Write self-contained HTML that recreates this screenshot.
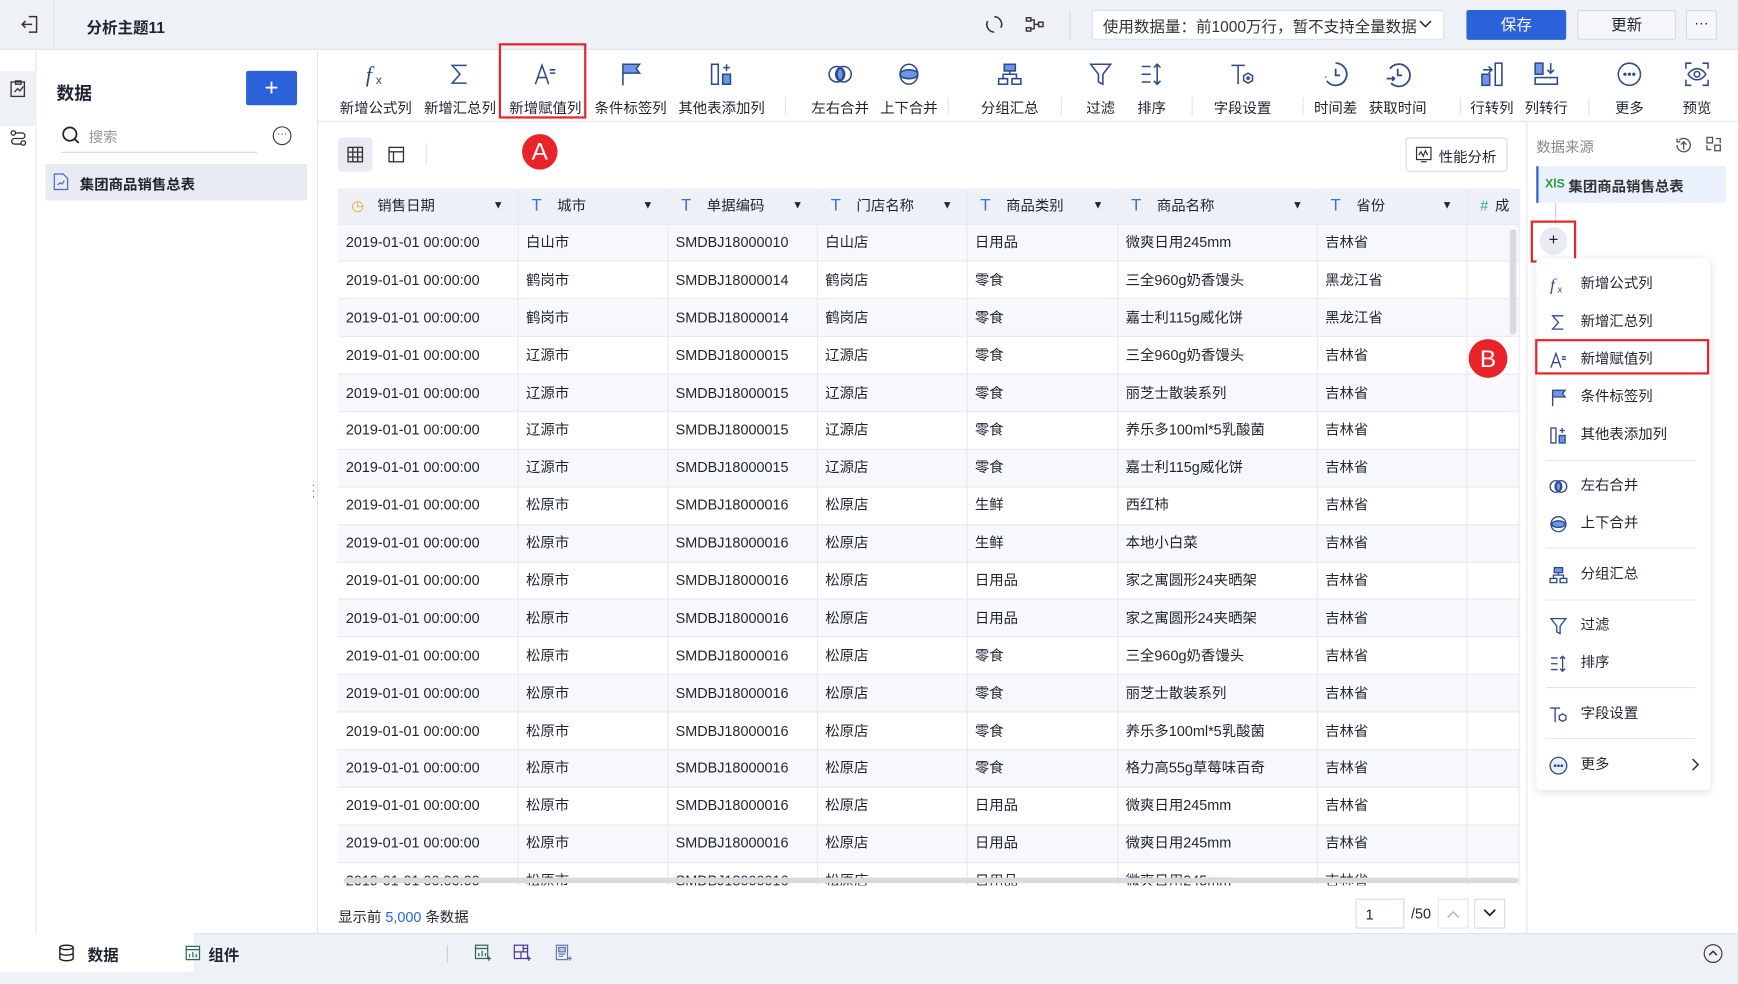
<!DOCTYPE html>
<html><head><meta charset="utf-8">
<style>
*{box-sizing:border-box;margin:0;padding:0}
html,body{width:1738px;height:984px;overflow:hidden;background:#fff}
body{font-family:"Liberation Sans","Noto Sans CJK SC",sans-serif;color:#1f2433;font-size:13px}
#w{width:1568px;height:888px;position:relative;transform:scale(1.10842,1.10811);transform-origin:0 0;background:#fff;overflow:hidden}
.a{position:absolute}
.top{left:0;top:0;width:1568px;height:45px;background:#eef1f6;border-bottom:1px solid #dde1ea}
.tb{top:45px;left:287px;width:1281px;height:65px;border-bottom:1px solid #e3e6ee}
.ti{position:absolute;top:0;height:65px;text-align:center;font-size:13px;color:#1f2433}
.ti svg{position:absolute;top:10px;left:50%;margin-left:-12px}
.ti span{position:absolute;top:42px;left:0;right:0;white-space:nowrap}
.sep{position:absolute;top:88px;width:1px;height:16px;background:#dfe2ea}
table{border-collapse:collapse;position:absolute;left:305px;top:170px;table-layout:fixed}
td,th{height:33.9px;border-right:1px solid #e6e9f0;border-bottom:1px solid #e6e9f0;padding-left:7px;white-space:nowrap;overflow:hidden;font-weight:normal;text-align:left;font-size:13px;line-height:16px}
td{padding-top:0}
th{height:32px;background:#edf0f6;padding-left:12px}
tr:nth-child(even) td{background:#f7f8fb}
.T{color:#3c6fe0;font-size:15px;margin-right:14px}
.dr{float:right;margin-right:12px;font-size:10px;line-height:16px}
.mi{position:absolute;left:1398px;font-size:13px;height:20px;line-height:20px}
.mi i{display:inline-block;width:28px;color:#2d4a8a;font-style:normal}
.hl{position:absolute;left:1395px;width:135px;height:1px;background:#e3e6ee}
</style></head><body><div id="w">
<div class="a top"></div>
<div class="a" style="left:48px;top:0;width:1px;height:45px;background:#dde1ea"></div>
<svg class="a" style="left:18px;top:13px" width="18" height="18" viewBox="0 0 18 18" fill="none" stroke="#333" stroke-width="1.3"><path d="M8 2h7v14H8M2 9h9M5 6L2 9l3 3"/></svg>
<div class="a" style="left:78px;top:15px;font-weight:bold;font-size:14px">分析主题11</div>
<svg class="a" style="left:888px;top:13px" width="18" height="18" viewBox="0 0 18 18" fill="none" stroke="#333" stroke-width="1.4"><path d="M9 2a7 7 0 0 1 6 10M9 16a7 7 0 0 1-6-10"/></svg>
<svg class="a" style="left:925px;top:14px" width="18" height="16" viewBox="0 0 18 16" fill="none" stroke="#333" stroke-width="1.3"><rect x="1" y="2" width="4" height="3"/><rect x="1" y="11" width="4" height="3"/><rect x="12" y="6" width="4" height="4"/><path d="M5 4h3v8H5M8 8h4"/></svg>
<div class="a" style="left:965px;top:10px;width:1px;height:26px;background:#d6dae3"></div>
<div class="a" style="left:985px;top:9px;width:318px;height:27px;background:#fff;border:1px solid #dde1ea;border-radius:3px;padding:4px 9px;font-size:14px;color:#333">使用数据量：前1000万行，暂不支持全量数据<svg style="position:absolute;right:10px;top:8px" width="12" height="8" viewBox="0 0 12 8" fill="none" stroke="#333" stroke-width="1.4"><path d="M1 1l5 5 5-5"/></svg></div>
<div class="a" style="left:1323px;top:9px;width:90px;height:27px;background:#2b62d9;border-radius:2px;color:#fff;text-align:center;line-height:27px;font-size:14px">保存</div>
<div class="a" style="left:1423px;top:9px;width:89px;height:27px;background:#f5f6f9;border:1px solid #d6dae3;border-radius:2px;text-align:center;line-height:25px;font-size:14px">更新</div>
<div class="a" style="left:1521px;top:9px;width:28px;height:27px;background:#f5f6f9;border:1px solid #d6dae3;border-radius:2px;text-align:center;line-height:22px">···</div>

<div class="a" style="left:0;top:45px;width:33px;height:797px;background:#fff;border-right:1px solid #e3e6ee"></div>
<div class="a" style="left:0;top:64px;width:33px;height:50px;background:#eef1f6"></div>
<svg class="a" style="left:8px;top:71px" width="17" height="18" viewBox="0 0 17 18" fill="none" stroke="#333" stroke-width="1.2"><rect x="2" y="3" width="12" height="13"/><path d="M6 2h5v3H6zM5 12l3-3 2 2 3-4"/></svg>
<svg class="a" style="left:8px;top:116px" width="17" height="17" viewBox="0 0 17 17" fill="none" stroke="#333" stroke-width="1.2"><circle cx="4" cy="4" r="2"/><circle cx="13" cy="13" r="2"/><path d="M6 4h6a2.5 2.5 0 0 1 0 5H5a2.5 2.5 0 0 0 0 5h6"/></svg>
<div class="a" style="left:286px;top:45px;width:1px;height:797px;background:#e3e6ee"></div>
<div class="a" style="left:51px;top:71px;font-weight:bold;font-size:16px">数据</div>
<div class="a" style="left:222px;top:64px;width:46px;height:31px;background:#2b62d9;border-radius:2px;color:#fff;text-align:center;font-size:22px;line-height:29px">+</div>
<svg class="a" style="left:55px;top:113px" width="18" height="18" viewBox="0 0 18 18" fill="none" stroke="#222" stroke-width="1.6"><circle cx="8" cy="8" r="6"/><path d="M12.5 12.5L16 16"/></svg>
<div class="a" style="left:80px;top:113px;color:#999;font-size:13px">搜索</div>
<div class="a" style="left:55px;top:137px;width:177px;height:1px;background:#d6dae3"></div>
<div class="a" style="left:246px;top:114px;width:17px;height:17px;border:1.3px solid #333;border-radius:50%;font-size:9px;text-align:center;line-height:11px">···</div>
<div class="a" style="left:41px;top:148px;width:236px;height:33px;background:#e8ebf2"></div>
<svg class="a" style="left:48px;top:156px" width="14" height="16" viewBox="0 0 14 16" fill="none" stroke="#4a6ad0" stroke-width="1.1"><path d="M1 1h8l4 4v10H1z"/><path d="M4 11l2-2 2 1 2-3"/></svg>
<div class="a" style="left:72px;top:156px;font-weight:bold;font-size:13px">集团商品销售总表</div>
<div class="a" style="left:281px;top:436px;color:#666;font-size:11px;line-height:5px">·<br>·<br>·</div>

<div class="a tb">
<div class="ti" style="left:16px;width:72px"><svg width="24" height="24" viewBox="0 0 24 24"><text x="3" y="19" font-family="Liberation Serif" font-style="italic" font-size="20" fill="#2d4a8a">f</text><text x="12" y="21" font-size="11" fill="#2d4a8a" font-family="Liberation Sans">x</text></svg><span>新增公式列</span></div>
<div class="ti" style="left:92px;width:72px"><svg width="24" height="24" viewBox="0 0 24 24" fill="none" stroke="#2d4a8a" stroke-width="1.4"><path d="M18 4H5l7 8-7 8h13"/></svg><span>新增汇总列</span></div>
<div class="ti" style="left:169px;width:72px"><svg width="24" height="24" viewBox="0 0 24 24" fill="none" stroke="#2d4a8a" stroke-width="1.4"><path d="M3 21l6-17 6 17M5.5 15h7M16 8h5M16 11h5"/></svg><span>新增赋值列</span></div>
<div class="ti" style="left:246px;width:72px"><svg width="24" height="24" viewBox="0 0 24 24" fill="none" stroke="#2d4a8a" stroke-width="1.4"><path d="M5 22V3h15l-3 4 3 4H5" fill="#6f95e8"/></svg><span>条件标签列</span></div>
<div class="ti" style="left:322px;width:84px"><svg width="24" height="24" viewBox="0 0 24 24" fill="none" stroke="#2d4a8a" stroke-width="1.4"><rect x="3" y="3" width="6" height="18"/><rect x="13" y="12" width="7" height="9" fill="#6f95e8"/><path d="M16.5 3v6M13.5 6h6"/></svg><span>其他表添加列</span></div>
<div class="sep" style="left:421px;top:43px"></div>
<div class="ti" style="left:435px;width:72px"><svg width="24" height="24" viewBox="0 0 24 24" fill="none" stroke="#2d4a8a" stroke-width="1.4"><circle cx="9" cy="12" r="7"/><circle cx="15" cy="12" r="7"/><path d="M12 6.3a7 7 0 0 1 0 11.4a7 7 0 0 1 0-11.4" fill="#6f95e8"/></svg><span>左右合并</span></div>
<div class="ti" style="left:497px;width:72px"><svg width="24" height="24" viewBox="0 0 24 24" fill="none" stroke="#2d4a8a" stroke-width="1.4"><ellipse cx="12" cy="12" rx="8" ry="9"/><ellipse cx="12" cy="12" rx="8" ry="4" fill="#6f95e8"/></svg><span>上下合并</span></div>
<div class="sep" style="left:568px;top:43px"></div>
<div class="ti" style="left:588px;width:72px"><svg width="24" height="24" viewBox="0 0 24 24" fill="none" stroke="#2d4a8a" stroke-width="1.4"><rect x="7" y="3" width="10" height="6" fill="#6f95e8"/><rect x="2" y="16" width="8" height="5"/><rect x="14" y="16" width="8" height="5"/><path d="M12 9v3M6 16v-4h12v4"/></svg><span>分组汇总</span></div>
<div class="sep" style="left:670px;top:43px"></div>
<div class="ti" style="left:685px;width:42px"><svg width="24" height="24" viewBox="0 0 24 24" fill="none" stroke="#2d4a8a" stroke-width="1.4"><path d="M3 3h18l-7 9v9l-4-2v-7z"/></svg><span>过滤</span></div>
<div class="ti" style="left:731px;width:42px"><svg width="24" height="24" viewBox="0 0 24 24" fill="none" stroke="#2d4a8a" stroke-width="1.4"><path d="M3 5h8M3 12h8M3 19h8M17 3v18M14 6l3-3 3 3M14 18l3 3 3-3"/></svg><span>排序</span></div>
<div class="sep" style="left:788px;top:43px"></div>
<div class="ti" style="left:798px;width:72px"><svg width="24" height="24" viewBox="0 0 24 24" fill="none" stroke="#2d4a8a" stroke-width="1.4"><path d="M2 4h12M8 4v17"/><path d="M17 11l4 2.3v4.4L17 20l-4-2.3v-4.4z"/><circle cx="17" cy="15.5" r="1"/></svg><span>字段设置</span></div>
<div class="sep" style="left:888px;top:43px"></div>
<div class="ti" style="left:893px;width:50px"><svg width="24" height="24" viewBox="0 0 24 24" fill="none" stroke="#2d4a8a" stroke-width="1.6"><path d="M12 2a10 10 0 1 1-8 16" /><path d="M12 7v6h4" /><path d="M3 14v1M5 19v0" stroke-dasharray="1 2"/></svg><span>时间差</span></div>
<div class="ti" style="left:945px;width:58px"><svg width="24" height="24" viewBox="0 0 24 24" fill="none" stroke="#2d4a8a" stroke-width="1.6"><path d="M5 7a10 10 0 1 1 1 13"/><path d="M12 7v6h4M2 16h7M7 14l2 2-2 2"/></svg><span>获取时间</span></div>
<div class="sep" style="left:1030px;top:43px"></div>
<div class="ti" style="left:1037px;width:44px"><svg width="24" height="24" viewBox="0 0 24 24" fill="none" stroke="#2d4a8a" stroke-width="1.4"><rect x="15" y="2" width="6" height="20"/><rect x="3" y="12" width="7" height="10" fill="#6f95e8"/><path d="M4 8h8M9 5l3 3-3 3"/></svg><span>行转列</span></div>
<div class="ti" style="left:1084px;width:48px"><svg width="24" height="24" viewBox="0 0 24 24" fill="none" stroke="#2d4a8a" stroke-width="1.4"><rect x="2" y="15" width="20" height="6"/><rect x="2" y="2" width="7" height="10" fill="#6f95e8"/><path d="M16 2v9M13 8l3 3 3-3"/></svg><span>列转行</span></div>
<div class="sep" style="left:1146px;top:43px"></div>
<div class="ti" style="left:1158px;width:50px"><svg width="24" height="24" viewBox="0 0 24 24" fill="none" stroke="#2d4a8a" stroke-width="1.4"><circle cx="12" cy="12" r="10"/><circle cx="8" cy="12" r=".8" fill="#2d4a8a"/><circle cx="12" cy="12" r=".8" fill="#2d4a8a"/><circle cx="16" cy="12" r=".8" fill="#2d4a8a"/></svg><span>更多</span></div>
<div class="ti" style="left:1222px;width:44px"><svg width="24" height="24" viewBox="0 0 24 24" fill="none" stroke="#2d4a8a" stroke-width="1.4"><path d="M2 7V2h5M17 2h5v5M22 17v5h-5M7 22H2v-5M4 12s3-5 8-5 8 5 8 5-3 5-8 5-8-5-8-5z"/><circle cx="12" cy="12" r="2.5"/></svg><span>预览</span></div>
</div>
<div class="a" style="left:450px;top:39px;width:79px;height:68px;border:2px solid #e8242a"></div>
<div class="a" style="left:471px;top:121px;width:32px;height:32px;border-radius:50%;background:#e8242a;color:#fff;text-align:center;line-height:32px;font-size:22px">A</div>

<div class="a" style="left:305px;top:124px;width:31px;height:31px;background:#e8ebf2;border-radius:3px"></div>
<svg class="a" style="left:313px;top:132px" width="15" height="15" viewBox="0 0 15 15" fill="none" stroke="#333" stroke-width="1.2"><rect x="1" y="1" width="13" height="13"/><path d="M5.3 1v13M9.7 1v13M1 5.3h13M1 9.7h13"/></svg>
<svg class="a" style="left:350px;top:132px" width="15" height="15" viewBox="0 0 15 15" fill="none" stroke="#333" stroke-width="1.2"><rect x="1" y="1" width="13" height="13"/><path d="M1 5h13M5 5v9"/></svg>
<div class="a" style="left:384px;top:129px;width:1px;height:20px;background:#e3e6ee"></div>
<div class="a" style="left:1268px;top:124px;width:92px;height:31px;border:1px solid #d6dae3;border-radius:3px;padding:6px 0 0 29px;font-size:13px">性能分析</div>
<svg class="a" style="left:1277px;top:132px" width="15" height="15" viewBox="0 0 15 15" fill="none" stroke="#333" stroke-width="1.1"><rect x="1" y="1" width="13" height="11"/><path d="M3 8l2-3 2 4 2-5 2 4M5 14h5"/></svg>

<table>
<colgroup><col style="width:162px"><col style="width:135px"><col style="width:135px"><col style="width:135px"><col style="width:136px"><col style="width:180px"><col style="width:135px"><col style="width:47px"></colgroup>
<tr><th><span style="color:#f0a030;margin-right:12px">◷</span>销售日期<span class="dr">▼</span></th><th><span class="T">T</span>城市<span class="dr">▼</span></th><th><span class="T">T</span>单据编码<span class="dr">▼</span></th><th><span class="T">T</span>门店名称<span class="dr">▼</span></th><th><span class="T">T</span>商品类别<span class="dr">▼</span></th><th><span class="T">T</span>商品名称<span class="dr">▼</span></th><th><span class="T">T</span>省份<span class="dr">▼</span></th><th><span style="color:#2aa88a;margin-right:6px">#</span>成</th></tr>
<tr><td>2019-01-01 00:00:00</td><td>白山市</td><td>SMDBJ18000010</td><td>白山店</td><td>日用品</td><td>微爽日用245mm</td><td>吉林省</td><td></td></tr>
<tr><td>2019-01-01 00:00:00</td><td>鹤岗市</td><td>SMDBJ18000014</td><td>鹤岗店</td><td>零食</td><td>三全960g奶香馒头</td><td>黑龙江省</td><td></td></tr>
<tr><td>2019-01-01 00:00:00</td><td>鹤岗市</td><td>SMDBJ18000014</td><td>鹤岗店</td><td>零食</td><td>嘉士利115g威化饼</td><td>黑龙江省</td><td></td></tr>
<tr><td>2019-01-01 00:00:00</td><td>辽源市</td><td>SMDBJ18000015</td><td>辽源店</td><td>零食</td><td>三全960g奶香馒头</td><td>吉林省</td><td></td></tr>
<tr><td>2019-01-01 00:00:00</td><td>辽源市</td><td>SMDBJ18000015</td><td>辽源店</td><td>零食</td><td>丽芝士散装系列</td><td>吉林省</td><td></td></tr>
<tr><td>2019-01-01 00:00:00</td><td>辽源市</td><td>SMDBJ18000015</td><td>辽源店</td><td>零食</td><td>养乐多100ml*5乳酸菌</td><td>吉林省</td><td></td></tr>
<tr><td>2019-01-01 00:00:00</td><td>辽源市</td><td>SMDBJ18000015</td><td>辽源店</td><td>零食</td><td>嘉士利115g威化饼</td><td>吉林省</td><td></td></tr>
<tr><td>2019-01-01 00:00:00</td><td>松原市</td><td>SMDBJ18000016</td><td>松原店</td><td>生鲜</td><td>西红柿</td><td>吉林省</td><td></td></tr>
<tr><td>2019-01-01 00:00:00</td><td>松原市</td><td>SMDBJ18000016</td><td>松原店</td><td>生鲜</td><td>本地小白菜</td><td>吉林省</td><td></td></tr>
<tr><td>2019-01-01 00:00:00</td><td>松原市</td><td>SMDBJ18000016</td><td>松原店</td><td>日用品</td><td>家之寓圆形24夹晒架</td><td>吉林省</td><td></td></tr>
<tr><td>2019-01-01 00:00:00</td><td>松原市</td><td>SMDBJ18000016</td><td>松原店</td><td>日用品</td><td>家之寓圆形24夹晒架</td><td>吉林省</td><td></td></tr>
<tr><td>2019-01-01 00:00:00</td><td>松原市</td><td>SMDBJ18000016</td><td>松原店</td><td>零食</td><td>三全960g奶香馒头</td><td>吉林省</td><td></td></tr>
<tr><td>2019-01-01 00:00:00</td><td>松原市</td><td>SMDBJ18000016</td><td>松原店</td><td>零食</td><td>丽芝士散装系列</td><td>吉林省</td><td></td></tr>
<tr><td>2019-01-01 00:00:00</td><td>松原市</td><td>SMDBJ18000016</td><td>松原店</td><td>零食</td><td>养乐多100ml*5乳酸菌</td><td>吉林省</td><td></td></tr>
<tr><td>2019-01-01 00:00:00</td><td>松原市</td><td>SMDBJ18000016</td><td>松原店</td><td>零食</td><td>格力高55g草莓味百奇</td><td>吉林省</td><td></td></tr>
<tr><td>2019-01-01 00:00:00</td><td>松原市</td><td>SMDBJ18000016</td><td>松原店</td><td>日用品</td><td>微爽日用245mm</td><td>吉林省</td><td></td></tr>
<tr><td>2019-01-01 00:00:00</td><td>松原市</td><td>SMDBJ18000016</td><td>松原店</td><td>日用品</td><td>微爽日用245mm</td><td>吉林省</td><td></td></tr>
<tr><td>2019-01-01 00:00:00</td><td>松原市</td><td>SMDBJ18000016</td><td>松原店</td><td>日用品</td><td>微爽日用245mm</td><td>吉林省</td><td></td></tr>
</table>
<div class="a" style="left:287px;top:799px;width:1090px;height:43px;background:#fff"></div>
<div class="a" style="left:310px;top:792px;width:1060px;height:5px;background:#d8dae0;border-radius:3px"></div>
<div class="a" style="left:1362px;top:207px;width:6px;height:95px;background:#d8dae0;border-radius:3px"></div>
<div class="a" style="left:305px;top:817px;font-size:13px">显示前 <span style="color:#2b62d9">5,000</span> 条数据</div>
<div class="a" style="left:1223px;top:811px;width:44px;height:27px;border:1px solid #d6dae3;padding:6px 8px">1</div>
<div class="a" style="left:1273px;top:817px">/50</div>
<div class="a" style="left:1297px;top:811px;width:28px;height:27px;border:1px solid #e3e6ee"></div>
<svg class="a" style="left:1305px;top:821px" width="12" height="8" viewBox="0 0 12 8" fill="none" stroke="#bbb" stroke-width="1.4"><path d="M1 7l5-5 5 5"/></svg>
<div class="a" style="left:1330px;top:811px;width:28px;height:27px;border:1px solid #d6dae3"></div>
<svg class="a" style="left:1338px;top:820px" width="12" height="8" viewBox="0 0 12 8" fill="none" stroke="#222" stroke-width="1.6"><path d="M1 1l5 5 5-5"/></svg>
<div class="a" style="left:1325px;top:306px;width:35px;height:35px;border-radius:50%;background:#e8242a;color:#fff;text-align:center;line-height:35px;font-size:22px">B</div>

<div class="a" style="left:1377px;top:110px;width:1px;height:732px;background:#e3e6ee"></div>
<div class="a" style="left:1386px;top:122px;color:#888;font-size:13px">数据来源</div>
<svg class="a" style="left:1510px;top:122px" width="18" height="18" viewBox="0 0 18 18" fill="none" stroke="#555" stroke-width="1.2"><path d="M3 9a6 6 0 1 0 2-4.5M3 3v3h3M9 13V6M6.5 8.5L9 6l2.5 2.5"/></svg>
<svg class="a" style="left:1538px;top:122px" width="16" height="16" viewBox="0 0 16 16" fill="none" stroke="#555" stroke-width="1.2"><rect x="2" y="2" width="5" height="5"/><rect x="9" y="9" width="5" height="5"/><path d="M10 3h4v4M6 13H2V9"/></svg>
<div class="a" style="left:1386px;top:150px;width:171px;height:33px;background:#eaf0fc;border-left:2px solid #2b62d9"></div>
<div class="a" style="left:1394px;top:160px;color:#2a9a3a;font-size:11px;font-weight:bold">XlS</div>
<div class="a" style="left:1415px;top:158px;font-size:13px;font-weight:bold;color:#333">集团商品销售总表</div>
<div class="a" style="left:1403px;top:183px;width:1px;height:20px;background:#ccd"></div>
<div class="a" style="left:1381px;top:199px;width:41px;height:38px;border:2px solid #e8242a"></div>
<div class="a" style="left:1389px;top:205px;width:25px;height:25px;border-radius:50%;background:#e8ebf2;text-align:center;line-height:24px;font-size:15px">+</div>
<div class="a" style="left:1386px;top:233px;width:157px;height:480px;background:#fff;border-radius:4px;box-shadow:0 2px 8px rgba(0,0,0,.12)"></div>
<svg class="a" style="left:1397px;top:248px" width="18" height="18" viewBox="0 0 24 24"><text x="2" y="19" font-family="Liberation Serif" font-style="italic" font-size="20" fill="#2d4a8a">f</text><text x="11" y="21" font-size="11" fill="#2d4a8a">x</text></svg>
<svg class="a" style="left:1397px;top:282px" width="18" height="18" viewBox="0 0 24 24" fill="none" stroke="#2d4a8a" stroke-width="1.6"><path d="M18 4H5l7 8-7 8h13"/></svg>
<svg class="a" style="left:1397px;top:316px" width="18" height="18" viewBox="0 0 24 24" fill="none" stroke="#2d4a8a" stroke-width="1.6"><path d="M3 21l6-17 6 17M5.5 15h7M16 8h5M16 11h5"/></svg>
<svg class="a" style="left:1397px;top:350px" width="18" height="18" viewBox="0 0 24 24" fill="none" stroke="#2d4a8a" stroke-width="1.6"><path d="M5 22V3h15l-3 4 3 4H5" fill="#6f95e8"/></svg>
<svg class="a" style="left:1397px;top:384px" width="18" height="18" viewBox="0 0 24 24" fill="none" stroke="#2d4a8a" stroke-width="1.6"><rect x="3" y="3" width="6" height="18"/><rect x="13" y="12" width="7" height="9" fill="#6f95e8"/><path d="M16.5 3v6M13.5 6h6"/></svg>
<svg class="a" style="left:1397px;top:430px" width="18" height="18" viewBox="0 0 24 24" fill="none" stroke="#2d4a8a" stroke-width="1.6"><circle cx="9" cy="12" r="7"/><circle cx="15" cy="12" r="7"/><path d="M12 6.3a7 7 0 0 1 0 11.4a7 7 0 0 1 0-11.4" fill="#6f95e8"/></svg>
<svg class="a" style="left:1397px;top:464px" width="18" height="18" viewBox="0 0 24 24" fill="none" stroke="#2d4a8a" stroke-width="1.6"><ellipse cx="12" cy="12" rx="9" ry="9"/><ellipse cx="12" cy="12" rx="8" ry="4" fill="#6f95e8"/></svg>
<svg class="a" style="left:1397px;top:510px" width="18" height="18" viewBox="0 0 24 24" fill="none" stroke="#2d4a8a" stroke-width="1.6"><rect x="7" y="3" width="10" height="6" fill="#6f95e8"/><rect x="2" y="16" width="8" height="5"/><rect x="14" y="16" width="8" height="5"/><path d="M12 9v3M6 16v-4h12v4"/></svg>
<svg class="a" style="left:1397px;top:556px" width="18" height="18" viewBox="0 0 24 24" fill="none" stroke="#2d4a8a" stroke-width="1.6"><path d="M3 3h18l-7 9v9l-4-2v-7z"/></svg>
<svg class="a" style="left:1397px;top:590px" width="18" height="18" viewBox="0 0 24 24" fill="none" stroke="#2d4a8a" stroke-width="1.6"><path d="M3 5h8M3 12h8M3 19h8M17 3v18M14 6l3-3 3 3M14 18l3 3 3-3"/></svg>
<svg class="a" style="left:1397px;top:636px" width="18" height="18" viewBox="0 0 24 24" fill="none" stroke="#2d4a8a" stroke-width="1.6"><path d="M2 4h12M8 4v17"/><path d="M17 11l4 2.3v4.4L17 20l-4-2.3v-4.4z"/></svg>
<svg class="a" style="left:1397px;top:682px" width="18" height="18" viewBox="0 0 24 24" fill="none" stroke="#2d4a8a" stroke-width="1.6"><circle cx="12" cy="12" r="10" fill="#e8edf8"/><circle cx="8" cy="12" r=".8"/><circle cx="12" cy="12" r=".8"/><circle cx="16" cy="12" r=".8"/></svg>
<div class="mi" style="top:246px;left:1426px">新增公式列</div>
<div class="mi" style="top:280px;left:1426px">新增汇总列</div>
<div class="mi" style="top:314px;left:1426px">新增赋值列</div>
<div class="a" style="left:1385px;top:306px;width:157px;height:32px;border:2px solid #e8242a"></div>
<div class="mi" style="top:348px;left:1426px">条件标签列</div>
<div class="mi" style="top:382px;left:1426px">其他表添加列</div>
<div class="hl" style="top:415px"></div>
<div class="mi" style="top:428px;left:1426px">左右合并</div>
<div class="mi" style="top:462px;left:1426px">上下合并</div>
<div class="hl" style="top:494px"></div>
<div class="mi" style="top:508px;left:1426px">分组汇总</div>
<div class="hl" style="top:541px"></div>
<div class="mi" style="top:554px;left:1426px">过滤</div>
<div class="mi" style="top:588px;left:1426px">排序</div>
<div class="hl" style="top:620px"></div>
<div class="mi" style="top:634px;left:1426px">字段设置</div>
<div class="hl" style="top:666px"></div>
<div class="mi" style="top:680px;left:1426px">更多</div>
<svg class="a" style="left:1526px;top:684px" width="8" height="12" viewBox="0 0 8 12" fill="none" stroke="#333" stroke-width="1.4"><path d="M1 1l5 5-5 5"/></svg>

<div class="a" style="left:0;top:842px;width:1568px;height:46px;background:#eef1f6;border-top:1px solid #dde1ea"></div>
<div class="a" style="left:0;top:842px;width:175px;height:35px;background:#fff;border-radius:0 0 4px 0"></div>
<svg class="a" style="left:53px;top:852px" width="14" height="16" viewBox="0 0 14 16" fill="none" stroke="#222" stroke-width="1.3"><ellipse cx="7" cy="3" rx="6" ry="2"/><path d="M1 3v10c0 1 3 2 6 2s6-1 6-2V3M1 8c0 1 3 2 6 2s6-1 6-2"/></svg>
<div class="a" style="left:79px;top:852px;font-weight:bold;font-size:14px">数据</div>
<svg class="a" style="left:167px;top:853px" width="14" height="14" viewBox="0 0 14 14" fill="none" stroke="#2d6a5a" stroke-width="1.1"><rect x="1" y="1" width="12" height="12"/><path d="M1 4h12M4 11V8M7 11V6M10 11V8"/></svg>
<div class="a" style="left:188px;top:852px;font-weight:bold;font-size:14px">组件</div>
<div class="a" style="left:403px;top:853px;width:1px;height:16px;background:#ccc"></div>
<svg class="a" style="left:428px;top:852px" width="16" height="16" viewBox="0 0 16 16" fill="none" stroke="#2d6a5a" stroke-width="1.1"><rect x="1" y="1" width="11" height="12"/><path d="M1 4h11M4 11V8M7 11V6M10 11V8M13 11v4M11 13h4"/></svg>
<svg class="a" style="left:463px;top:852px" width="16" height="16" viewBox="0 0 16 16" fill="none" stroke="#4a3aa0" stroke-width="1.1"><rect x="1" y="1" width="12" height="12"/><path d="M1 7h12M7 7v6M9 1v6M9 4h4M14 11v4M12 13h4"/></svg>
<svg class="a" style="left:500px;top:852px" width="16" height="16" viewBox="0 0 16 16" fill="none" stroke="#6a7ab0" stroke-width="1.1"><rect x="2" y="1" width="10" height="13"/><rect x="4" y="3" width="6" height="4" fill="#b8c4e4"/><path d="M4 9h6M4 11h4M14 11v4M12 13h4"/></svg>
<div class="a" style="left:1537px;top:852px;width:17px;height:17px;border:1.3px solid #333;border-radius:50%"></div>
<svg class="a" style="left:1541px;top:857px" width="9" height="6" viewBox="0 0 9 6" fill="none" stroke="#333" stroke-width="1.3"><path d="M1 5l3.5-3.5L8 5"/></svg>
</div></body></html>
